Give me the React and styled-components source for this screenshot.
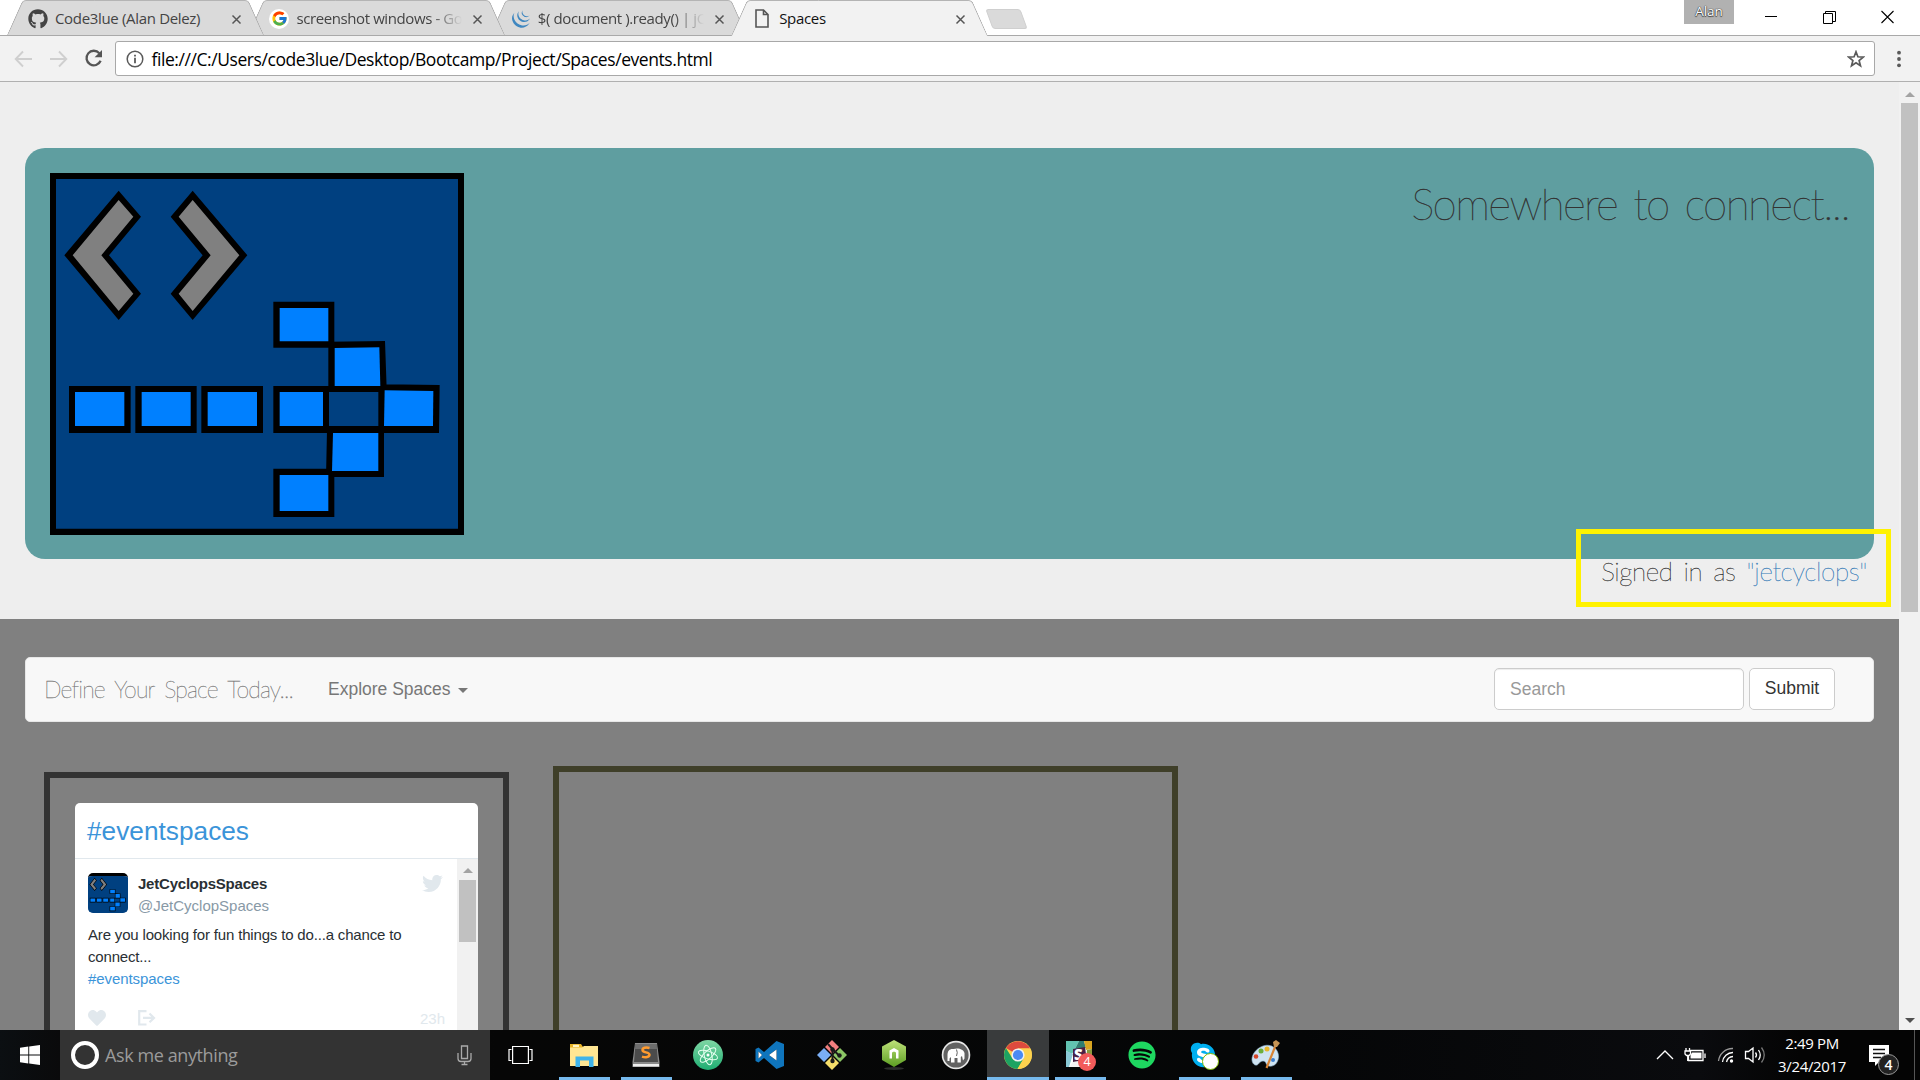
import React from "react";
import styled, { createGlobalStyle, css } from "styled-components";
import { FaGithub, FaTwitter, FaHeart, FaSpotify, FaSkype } from "react-icons/fa";
import { FcGoogle } from "react-icons/fc";
import { SiJquery } from "react-icons/si";

const GlobalStyle = createGlobalStyle`
  * { box-sizing: border-box; }
  html, body { margin: 0; padding: 0; overflow: hidden; }
  body { width: 1920px; height: 1080px; background: #fff; }
  svg { display: block; }
`;

const ui = `"Open Sans", "Noto Sans", sans-serif`;
const arial = `"Liberation Sans", Arial, sans-serif`;
const thin = `Lato, "Open Sans", sans-serif`;

const Screen = styled.div`
  display: flex;
  flex-direction: column;
  width: 1920px;
  height: 1080px;
  overflow: hidden;
  font-family: ${ui};
`;

/* ---------- browser chrome ---------- */

const TabStrip = styled.header`
  position: relative;
  display: flex;
  justify-content: space-between;
  height: 36px;
  flex: none;
  padding-left: 7px;
  background: #fff;
  box-shadow: inset 0 -1px 0 #a9a9a9;
`;

const Tabs = styled.div`
  display: flex;
`;

const Tab = styled.div`
  position: relative;
  z-index: ${(p) => p.$z};
  display: flex;
  align-items: center;
  width: 257px;
  height: 36px;
  margin-right: -15.6px;
  padding: 0 22px 0 21px;
  color: ${(p) => (p.$active ? "#111" : "#444")};
  &::before,
  &::after {
    content: "";
    position: absolute;
    z-index: -1;
    top: 0;
    bottom: ${(p) => (p.$active ? "0" : "1px")};
    background: ${(p) => (p.$active ? "#f2f2f2" : "#dadada")};
    border-top: 1px solid #b4b4b4;
  }
  &::before {
    left: 0;
    right: 40%;
    border-left: 1px solid #a6a6a6;
    border-top-left-radius: 4px;
    transform: skewX(-24deg);
    transform-origin: bottom left;
  }
  &::after {
    left: 40%;
    right: 0;
    border-right: 1px solid #a6a6a6;
    border-top-right-radius: 4px;
    transform: skewX(24deg);
    transform-origin: bottom right;
  }
`;

const TabIcon = styled.span`
  display: flex;
  flex: none;
  align-items: center;
  justify-content: center;
  width: 20px;
  height: 20px;
  margin: 1px 7px 0 0;
  border-radius: 50%;
  background: ${(p) => p.$bg || "transparent"};
  color: ${(p) => p.$color || "#444"};
`;

const TabTitle = styled.span`
  flex: 1;
  min-width: 0;
  white-space: nowrap;
  font-size: 15px;
  line-height: 22px;
  letter-spacing: ${(p) => p.$ls || "-0.33px"};
  ${(p) =>
    p.$fade &&
    css`
      -webkit-mask-image: linear-gradient(to right, #000 82%, transparent 100%);
      mask-image: linear-gradient(to right, #000 82%, transparent 100%);
    `}
`;

const TabClose = styled.span`
  display: flex;
  flex: none;
  width: 11px;
  margin: 2px 0 0 10px;
`;

const NewTab = styled.span`
  width: 35px;
  height: 20px;
  margin: 9px 0 0 16px;
  border: 1px solid #cfcfcf;
  border-radius: 3px;
  background: #dadada;
  transform: skewX(20deg);
`;

const WindowControls = styled.div`
  display: flex;
  padding-right: 26px;
`;

const Profile = styled.span`
  width: 50px;
  height: 24px;
  margin-right: 31px;
  background: #b1b1b1;
  color: #fff;
  font-size: 13.5px;
  line-height: 22px;
  text-align: center;
  letter-spacing: 0;
  text-shadow: 0 0 1px #333, 0 0 1px #333, 0 1px 1px #444;
`;

const ControlIcons = styled.div`
  display: flex;
  gap: 44.5px;
  padding-top: 10px;
`;

const Toolbar = styled.div`
  display: flex;
  align-items: center;
  flex: none;
  height: 46px;
  padding: 0 15px 0 14px;
  background: #f2f2f2;
  border-bottom: 1px solid #b0b0b0;
`;

const NavIcons = styled.div`
  display: flex;
  align-items: center;
  gap: 16px;
  width: 101px;
`;

const AddressBar = styled.div`
  display: flex;
  align-items: center;
  width: 1760px;
  height: 35px;
  padding: 0 9px 0 10px;
  background: #fff;
  border: 1px solid #a8a8a8;
  border-radius: 3px;
`;

const Url = styled.span`
  flex: 1;
  margin-left: 7.5px;
  color: #000;
  font-size: 17.5px;
  line-height: 30px;
  letter-spacing: -0.43px;
`;

const MenuDots = styled.div`
  display: flex;
  margin-left: 22px;
`;

/* ---------- page ---------- */

const Viewport = styled.div`
  display: flex;
  flex: none;
  height: 948px;
`;

const Page = styled.main`
  display: flex;
  flex-direction: column;
  width: 1899px;
  height: 948px;
  overflow: hidden;
  background: #808080;
`;

const Scrollbar = styled.div`
  display: flex;
  flex-direction: column;
  align-items: center;
  width: 21px;
  height: 100%;
  padding: ${(p) => p.$pad || "10px 0 7px"};
  background: #f1f1f1;
`;

const Arrow = styled.span`
  width: 0;
  height: 0;
  border: 5px solid transparent;
  ${(p) =>
    p.$down
      ? css`
          margin-top: auto;
          border-bottom: 0;
          border-top-color: #505050;
        `
      : css`
          border-top: 0;
          border-bottom-color: #a3a3a3;
        `}
`;

const Thumb = styled.span`
  width: 17px;
  height: ${(p) => p.$h}px;
  margin-top: ${(p) => p.$gap}px;
  background: #c1c1c1;
`;

const Jumbotron = styled.section`
  position: relative;
  flex: none;
  height: 537px;
  padding: 66px 25px 0;
  background: #eee;
`;

const Banner = styled.div`
  display: flex;
  justify-content: space-between;
  height: 411px;
  padding: 25px;
  border-radius: 20px;
  background: #5f9ea0;
`;

const Slogan = styled.h1`
  margin: 0;
  color: #333;
  font-family: ${thin};
  font-weight: 100;
  font-size: 44px;
  line-height: 60px;
  letter-spacing: -1.6px;
  word-spacing: 5px;
  -webkit-text-stroke: 0.4px currentColor;
`;

const SignedIn = styled.p`
  margin: -6px 7px 0 0;
  text-align: right;
  color: #333;
  font-family: ${thin};
  font-weight: 100;
  font-size: 26px;
  line-height: 36px;
  letter-spacing: -0.4px;
  word-spacing: 4px;
  -webkit-text-stroke: 0.3px currentColor;
`;

const UserName = styled.span`
  color: #337ab7;
`;

const Highlight = styled.div`
  position: absolute;
  left: 1576px;
  top: 447px;
  width: 315px;
  height: 78px;
  border: 5px solid #fff200;
`;

const Navbar = styled.nav`
  display: flex;
  align-items: center;
  flex: none;
  height: 65px;
  margin: 38px 25px 0;
  padding: 0 38px 0 18px;
  border: 1px solid #e7e7e7;
  border-radius: 5px;
  background: #f8f8f8;
`;

const Brand = styled.span`
  width: 284px;
  padding-bottom: 1px;
  color: #777;
  font-family: ${thin};
  font-weight: 100;
  font-size: 23px;
  line-height: 30px;
  white-space: nowrap;
  letter-spacing: -0.85px;
  word-spacing: 4.5px;
  -webkit-text-stroke: 0.3px currentColor;
`;

const NavLink = styled.span`
  display: flex;
  align-items: center;
  flex: 1;
  gap: 7px;
  color: #777;
  font-family: ${arial};
  font-size: 17.5px;
  line-height: 25px;
  &::after {
    content: "";
    margin-top: 2px;
    border: 5px solid transparent;
    border-bottom: 0;
    border-top-color: #777;
  }
`;

const SearchInput = styled.input`
  width: 250px;
  height: 42px;
  margin: 0 5px 2px 0;
  padding: 1px 15px 0;
  border: 1px solid #ccc;
  border-radius: 5px;
  box-shadow: inset 0 1px 1px rgba(0, 0, 0, 0.075);
  font-family: ${arial};
  font-size: 17.5px;
  &::placeholder {
    color: #999;
    opacity: 1;
  }
`;

const SubmitButton = styled.button`
  width: 86px;
  height: 42px;
  margin: 0 0 2px;
  padding: 0;
  border: 1px solid #ccc;
  border-radius: 5px;
  background: #fff;
  color: #333;
  font-family: ${arial};
  font-size: 17.5px;
`;

const Columns = styled.section`
  display: flex;
  align-items: flex-start;
  padding: 44px 0 0 44px;
`;

const Frame = styled.div`
  width: ${(p) => p.$w}px;
  height: 400px;
  margin: ${(p) => p.$m || 0};
  padding: 25px;
  border: 6px solid ${(p) => p.$color};
`;

const Widget = styled.article`
  width: 403px;
  height: 400px;
  border-radius: 5px;
  overflow: hidden;
  background: #fff;
  font-family: ${arial};
`;

const WidgetHeader = styled.h2`
  height: 56px;
  margin: 0;
  padding: 0 12px;
  border-bottom: 1px solid #e1e8ed;
  color: #3b94d9;
  font-weight: 400;
  font-size: 26.25px;
  line-height: 56px;
`;

const WidgetBody = styled.div`
  display: flex;
  height: 344px;
`;

const Tweet = styled.div`
  flex: 1;
  padding: 14px 12px 0 13px;
`;

const Author = styled.div`
  display: flex;
  height: 40px;
  padding-right: 2px;
  color: #e1e8ed;
`;

const Avatar = styled.span`
  width: 40px;
  height: 40px;
  margin-right: 10px;
  border-top: 3px solid #000;
  border-radius: 5px;
  overflow: hidden;
`;

const Names = styled.div`
  flex: 1;
  line-height: 22px;
`;

const FullName = styled.div`
  color: #292f33;
  font-size: 15px;
  font-weight: 700;
  letter-spacing: -0.22px;
`;

const Handle = styled.div`
  color: #8899a6;
  font-size: 15px;
`;

const TweetText = styled.p`
  margin: 11px 0 0;
  color: #292f33;
  font-size: 15px;
  line-height: 22px;
  letter-spacing: -0.17px;
  white-space: nowrap;
`;

const HashTag = styled.span`
  color: #3b94d9;
  letter-spacing: -0.07px;
`;

const TweetActions = styled.div`
  display: flex;
  align-items: center;
  height: 22px;
  margin-top: 17px;
  color: #e1e8ed;
  font-size: 15px;
`;

const ShareSlot = styled.span`
  flex: 1;
  padding-left: 32px;
`;

/* ---------- taskbar ---------- */

const Taskbar = styled.footer`
  display: flex;
  flex: none;
  height: 50px;
  background: linear-gradient(to right, #0b0f12 0, #0a0a0b 60px, #060606 500px, #050607 1300px, #0a0b0e 1700px, #040404 1800px);
`;

const Center = styled.span`
  display: flex;
  align-items: center;
  justify-content: center;
  width: ${(p) => p.$w}px;
  height: 50px;
  padding-right: ${(p) => p.$pr || 0}px;
`;

const Cortana = styled.div`
  display: flex;
  align-items: center;
  width: 430px;
  padding: 0 18px 0 11px;
  background: #333;
`;

const CortanaRing = styled.span`
  width: 28px;
  height: 28px;
  border: 4px solid #fff;
  border-radius: 50%;
`;

const CortanaText = styled.span`
  flex: 1;
  margin-left: 6px;
  color: #9b9b9b;
  font-size: 18px;
  letter-spacing: -0.4px;
`;

const AppSlot = styled.span`
  display: flex;
  align-items: center;
  justify-content: center;
  width: 62px;
  height: 50px;
  background:
    linear-gradient(#76b9ed, #76b9ed) bottom / ${(p) => (p.$active ? "62px" : p.$open ? "51px" : "0")} 3px no-repeat,
    ${(p) => (p.$active ? "#393b3c" : "transparent")};
`;

const Tray = styled.div`
  display: flex;
  align-items: center;
  margin-left: auto;
  padding-right: 5px;
`;

const Clock = styled.div`
  width: 80px;
  margin: 0 16px 0 5px;
  color: #fff;
  font-size: 15px;
  line-height: 23px;
  text-align: center;
  letter-spacing: -0.35px;
  white-space: nowrap;
`;

const ActionCenter = styled.div`
  position: relative;
  width: 47px;
  height: 50px;
  padding: 15px 0 0 1px;
  border-right: 1px solid #555;
`;

const Badge = styled.span`
  position: absolute;
  left: 10px;
  top: 24px;
  width: 21px;
  height: 21px;
  border: 1px solid #999;
  border-radius: 50%;
  background: #222;
  color: #fff;
  font-size: 14px;
  font-weight: 600;
  line-height: 19px;
  text-align: center;
`;

/* ---------- drawings ---------- */

const bluePolys = [
  "165,756 313,756 313,858 165,858",
  "365,756 512,756 512,858 365,858",
  "563,756 711,756 711,858 563,858",
  "779,756 909,756 909,858 779,858",
  "779,504 925,504 925,604 779,604",
  "944,624 1078,622 1081,738 944,738",
  "1094,751 1240,753 1239,858 1092,858",
  "939,879 1075,879 1075,993 936,993",
  "779,1005 925,1005 925,1113 779,1113",
];

const Logo = ({ width, height, frame = "#000" }) => (
  <svg width={width} height={height} viewBox="90 99 1242 1086" preserveAspectRatio="none">
    <path d="M90 99H1332V1185H90Z" fill={frame} />
    <path d="M108 117H1314V1166H108Z" fill="#004080" />
    <path d="M133 346L296 152L363 230L267 346L363 461L296 540ZM518 152L682 346L518 540L452 461L548 346L452 230Z" />
    <path d="M158 346L296 180L340 230L244 346L340 461L296 513ZM518 180L658 346L518 513L476 461L572 346L476 230Z" fill="#808080" />
    <path d="M147 738H332V879H147ZM346 738H530V879H346ZM544 738H729V879H544ZM760 738H1092V879H760ZM760 485H943V623H760ZM925 605L1095 603L1100 745H925ZM1075 738L1092 733L1259 735L1257 879H1075ZM921 870H1092V1011H918ZM760 986H943V1131H760Z" />
    <path d="M927 756H1075V858H927Z" fill="#004080" />
    {bluePolys.map((p) => (
      <polygon key={p} points={p} fill="#0080ff" />
    ))}
  </svg>
);

const Cross = () => (
  <svg width="11" height="11" viewBox="0 0 11 11">
    <path d="M1.5 1.5L9.5 9.5M9.5 1.5L1.5 9.5" stroke="#555" strokeWidth="1.5" />
  </svg>
);

const FileIcon = () => (
  <svg width="14" height="19" viewBox="0 0 14 19" fill="none" stroke="#555" strokeWidth="1.6">
    <path d="M1 1H8.5L13 5.5V18H1ZM8.5 1V5.5H13" />
  </svg>
);

const WindowButtons = () => (
  <ControlIcons>
    <svg width="13" height="13" viewBox="0 0 13 13"><path d="M0 6.5H12" stroke="#000" /></svg>
    <svg width="14" height="14" viewBox="0 0 14 14" fill="none" stroke="#000">
      <path d="M.5 3.5H9.500V13.500H.5ZM2.500 3.500V1.500H12.500V11.500H9.500" />
    </svg>
    <svg width="13" height="14" viewBox="0 0 13 14"><path d="M.5 1L12.500 13M12.500 1L.5 13" stroke="#000" strokeWidth="1.1" /></svg>
  </ControlIcons>
);

const ArrowIcon = ({ flip }) => (
  <svg width="19" height="18" viewBox="0 0 19 18" fill="none" stroke="#cfcfcf" strokeWidth="1.9">
    <path d={flip ? "M1 9H17M10 1.500L17.300 9L10 16.500" : "M18 9H2M9 1.500L1.700 9L9 16.500"} />
  </svg>
);

const ReloadIcon = () => (
  <svg width="19" height="19" viewBox="0 0 19 19">
    <path d="M15.300 4.200A7.300 7.300 0 1 0 16.600 11.800" fill="none" stroke="#555" strokeWidth="2.300" />
    <path d="M18 1V8.300H10.600Z" fill="#555" />
  </svg>
);

const InfoIcon = () => (
  <svg width="18" height="18" viewBox="0 0 18 18">
    <circle cx="9" cy="9" r="7.800" fill="none" stroke="#5a5a5a" strokeWidth="1.500" />
    <path d="M9 7.800V13.200M9 4.800V6.500" stroke="#5a5a5a" strokeWidth="1.800" />
  </svg>
);

const StarIcon = () => (
  <svg width="18" height="18" viewBox="0 0 18 18">
    <path d="M9 1.800L10.900 6.800L16.300 7.100L12.100 10.500L13.500 15.800L9 12.800L4.500 15.800L5.900 10.500L1.700 7.100L7.100 6.800Z" fill="none" stroke="#5a5a5a" strokeWidth="1.700" />
  </svg>
);

const ShareIcon = () => (
  <svg width="18" height="16" viewBox="0 0 18 16" fill="none" stroke="#e1e8ed" strokeWidth="2.200">
    <path d="M8.500 1.200H1.200V14.500H8.500M5 7.900H15.500M11.500 3.500L16 7.900L11.500 12.300" />
  </svg>
);

const WindowsIcon = () => (
  <svg width="20" height="20" viewBox="0 0 20 20" fill="#fff">
    <path d="M0 2.800L8.300 1.600V9.500H0ZM9.200 1.500L20 0V9.500H9.200ZM0 10.400H8.300V18.400L0 17.200ZM9.200 10.400H20V20L9.200 18.500Z" />
  </svg>
);

const MicIcon = () => (
  <svg width="15" height="21" viewBox="0 0 15 21" fill="none" stroke="#aaa" strokeWidth="1.300">
    <path d="M4.500 1H10.500V13.500H4.500ZM1 8V13.500Q1 16.500 4 16.500H11Q14 16.500 14 13.500V8M7.500 16.500V19.500M4.500 19.500H10.500" />
  </svg>
);

const TaskViewIcon = () => (
  <svg width="25" height="20" viewBox="0 0 25 20" fill="none" stroke="#fff" strokeWidth="1.200">
    <path d="M4.600 1.500H20.400V18.500H4.600ZM3.500 4.500H1V15.500H3.500M21.500 4.500H24V15.500H21.500" />
  </svg>
);

const ExplorerIcon = () => (
  <svg width="28" height="24" viewBox="0 0 28 24">
    <path d="M0 1H11L13 4H26V7H0Z" fill="#e8b326" />
    <path d="M0 4.500H12L14 3H28V23H0Z" fill="#ffe693" />
    <path d="M3 1.800H9V4H3Z" fill="#fff3c0" />
    <path d="M5.500 24V13.500H23.500V24H19V17.500H10V24Z" fill="#3fb3ea" />
  </svg>
);

const SublimeIcon = () => (
  <svg width="28" height="26" viewBox="0 0 28 26">
    <path d="M3 1H25L27.500 20V25H.5V20Z" fill="#8a8a8a" />
    <path d="M3.500 2H24.500L26 20H2Z" fill="#4b4b4b" />
    <path d="M3.500 2H24.500L25 7H3Z" fill="#6d6d6d" />
    <path d="M1 22H27V24.500H1Z" fill="#eee" />
    <path d="M17.500 6C14 5 10.500 5.800 10.500 8C10.500 11.200 17.500 9.500 17.500 12.800C17.500 15 13.500 15.800 10 14.600" fill="none" stroke="#ff9b2f" strokeWidth="2.500" />
  </svg>
);

const AtomIcon = () => (
  <svg width="30" height="30" viewBox="0 0 30 30">
    <defs><linearGradient id="atom" x2="0" y2="1"><stop stopColor="#7fd6a4" /><stop offset="1" stopColor="#1fae72" /></linearGradient></defs>
    <circle cx="15" cy="15" r="15" fill="url(#atom)" />
    <g fill="none" stroke="#e6fff0" strokeWidth="1">
      <ellipse cx="15" cy="15" rx="3.800" ry="10" transform="rotate(-12 15 15)" />
      <ellipse cx="15" cy="15" rx="3.800" ry="10" transform="rotate(48 15 15)" />
      <ellipse cx="15" cy="15" rx="3.800" ry="10" transform="rotate(108 15 15)" />
    </g>
    <circle cx="15" cy="15" r="1.500" fill="#fff" />
  </svg>
);

const CodeIcon = () => (
  <svg width="30" height="28" viewBox="0 0 30 28">
    <path d="M21.500 0L29 3V25L21.500 28L9 17L3.500 21.500L.5 20V8L3.500 6.500L9 11ZM21.500 8.500L14 14L21.500 19.500ZM3.500 10.500V17.500L7 14Z" fill="#0f75bd" fillRule="evenodd" />
    <path d="M21.500 8.500L14 14L21.500 19.500ZM3.500 10.500V17.500L7 14Z" fill="#fff" />
  </svg>
);

const GitIcon = () => (
  <svg width="30" height="30" viewBox="0 0 30 30">
    <path d="M15 0L22 7L15 14L8 7Z" fill="#f37f7f" />
    <path d="M7 8L14 15L7 22L0 15Z" fill="#7aaef5" />
    <path d="M15 16L22 23L15 30L8 23Z" fill="#f5dd6a" />
    <path d="M23 8L30 15L23 22L16 15Z" fill="#8cc665" />
    <path d="M11 4L15.500 9V23M15.500 9L23 16.500" fill="none" stroke="#1a1a1a" strokeWidth="2" />
    <circle cx="15.500" cy="9.500" r="2.200" fill="#1a1a1a" />
    <circle cx="15.500" cy="21" r="2.200" fill="#1a1a1a" />
    <circle cx="22.500" cy="15.500" r="2.200" fill="#1a1a1a" />
  </svg>
);

const NodeIcon = () => (
  <svg width="26" height="30" viewBox="0 0 26 30">
    <defs><linearGradient id="node" x2="0" y2="1"><stop stopColor="#bfe27a" /><stop offset="1" stopColor="#5c9e22" /></linearGradient></defs>
    <ellipse cx="13" cy="28.500" rx="10" ry="1.500" fill="#2c2e2c" />
    <path d="M13 0L25 6.500V20L13 27L1 20V6.500Z" fill="url(#node)" />
    <path d="M8.500 18.500V10.500L13 8L17.500 10.500V18.500H15V12.500L13 11.500L11 12.500V18.500Z" fill="#fff" />
  </svg>
);

const MongooseIcon = () => (
  <svg width="30" height="30" viewBox="0 0 30 30">
    <circle cx="15" cy="15" r="14.300" fill="#e8e8e8" />
    <circle cx="15" cy="15" r="12.600" fill="#626262" />
    <path d="M6.500 21V15C6.500 10.500 9 8.500 12.500 9C17 7.500 22.500 9 23.500 13V18.500L22 20.500L21 16L19.800 17V22.500H16.500V18H13.500V22.500H10V17L8.500 18.500V21Z" fill="#fff" />
    <path d="M15.500 9.500Q17 12.500 15.500 16" stroke="#626262" fill="none" />
  </svg>
);

const ChromeIcon = () => (
  <svg width="28" height="28" viewBox="0 0 28 28">
    <circle cx="14" cy="14" r="14" fill="#fdd24e" />
    <path d="M14 14L1.900 7A14 14 0 0 1 26.100 7.500H14Z" fill="#dd4b3e" />
    <path d="M1.900 7A14 14 0 0 0 13.500 28L20 17.500L14 14L8.500 17.500Z" fill="#1da362" />
    <path d="M14 7.500H26.200A14 14 0 0 1 13.500 28L19.800 17Z" fill="#fdd24e" />
    <circle cx="14" cy="14" r="6.600" fill="#f1f1f1" />
    <circle cx="14" cy="14" r="5.100" fill="#4a8af4" />
  </svg>
);

const SlackApp = styled.span`
  position: relative;
  width: 30px;
  height: 30px;
`;

const SlackMark = styled.span`
  position: absolute;
  left: 9px;
  top: 3px;
  color: #fff;
  font-size: 15px;
  font-weight: 800;
  line-height: 22px;
`;

const SlackCount = styled.span`
  position: absolute;
  right: -1px;
  bottom: -1px;
  width: 18px;
  height: 18px;
  border-radius: 50%;
  background: #f25b5b;
  color: #fff;
  font-size: 12.500px;
  line-height: 18px;
  text-align: center;
`;

const SlackIcon = () => (
  <SlackApp>
    <svg width="28" height="28" viewBox="0 0 28 28">
      <path d="M1 1H27V27H1Z" fill="#fff" />
      <path d="M1 1H14L10 9L7 14L1 11Z" fill="#62c3b1" />
      <path d="M14 1H19L21 8L10 9Z" fill="#2f7d70" />
      <path d="M19 1H27V9L21 10Z" fill="#d9a521" />
      <path d="M1 11L8 14L4 27H1Z" fill="#89c9d6" />
      <path d="M8 9L20 7L22 21L8 22Z" fill="#4a1f45" />
      <path d="M8 22L20 20L27 27H4Z" fill="#f3f3f3" />
      <path d="M22 10L27 9V27L21 20Z" fill="#8a9a3c" />
    </svg>
    <SlackMark>S</SlackMark>
    <SlackCount>4</SlackCount>
  </SlackApp>
);

const SpotifyDisc = styled.span`
  display: flex;
  width: 28px;
  height: 28px;
  color: #1ed760;
`;

const SkypeApp = styled.span`
  position: relative;
  width: 29px;
  height: 29px;
  margin-right: 2px;
  color: #00aff0;
  background: radial-gradient(circle, #fff 8px, transparent 9px);
  &::after {
    content: "";
    position: absolute;
    right: -1px;
    bottom: 0;
    width: 15px;
    height: 15px;
    border: 1px solid #7fba00;
    border-radius: 50%;
    background: #fff;
  }
`;

const PaintIcon = () => (
  <svg width="30" height="30" viewBox="0 0 30 30">
    <path d="M12 6C20 3 28 9 27.500 17C27 24 22 27 18 26C14 25 16 21 12 21C8 21 8 26 4 25C-2 22 1 10 12 6Z" fill="#cfe3f2" stroke="#8fb3cf" strokeWidth=".6" />
    <circle cx="5" cy="16.500" r="2.300" fill="#d9482b" />
    <circle cx="10" cy="11" r="2.500" fill="#6cae3d" />
    <circle cx="16" cy="9" r="2.500" fill="#e9b62c" />
    <circle cx="22" cy="20" r="2" fill="#3c7fd0" />
    <path d="M15.500 28L24 7" stroke="#d98435" strokeWidth="2.200" />
    <path d="M23 7L22 2L25 0L29 3L26 7Z" fill="#c69455" />
  </svg>
);

const TrayIcons = () => (
  <svg width="112" height="24" viewBox="1655 1043 112 24" fill="none" stroke="#fff" strokeWidth="1.300">
    <path d="M1657 1059L1665 1051L1673 1059" />
    <path d="M1690 1050.500H1703V1060.500H1688.500V1056M1705 1053.500V1058M1686 1048V1051M1689.500 1048V1051M1685 1051H1690.500V1054L1689 1055.500H1686.500L1685 1054ZM1687.700 1055V1061" />
    <path d="M1692 1052.500H1701.500V1058.500H1690.500V1055Z" fill="#fff" stroke="none" />
    <path d="M1718.500 1061A14 14 0 0 1 1733 1048.500" stroke="#999" />
    <path d="M1722.500 1062A10.500 10.500 0 0 1 1733 1052.500M1726.500 1062A7 7 0 0 1 1733 1056.500" />
    <circle cx="1731.500" cy="1061" r="1.700" fill="#fff" stroke="none" />
    <path d="M1745.500 1051.500H1748.500L1753 1048V1062L1748.500 1058.500H1745.500ZM1755.500 1052.500Q1757.500 1055 1755.500 1057.500M1758.500 1050Q1762 1055 1758.500 1060" />
    <path d="M1761.500 1047.500Q1767 1055 1761.500 1062.500" stroke="#777" />
  </svg>
);

const apps = [
  { id: "explorer", icon: <ExplorerIcon />, open: true },
  { id: "sublime", icon: <SublimeIcon />, open: true },
  { id: "atom", icon: <AtomIcon /> },
  { id: "code", icon: <CodeIcon /> },
  { id: "git", icon: <GitIcon /> },
  { id: "node", icon: <NodeIcon /> },
  { id: "mongo", icon: <MongooseIcon /> },
  { id: "chrome", icon: <ChromeIcon />, active: true },
  { id: "slack", icon: <SlackIcon />, open: true },
  { id: "spotify", icon: <SpotifyDisc><FaSpotify size={28} /></SpotifyDisc> },
  { id: "skype", icon: <SkypeApp><FaSkype size={29} /></SkypeApp>, open: true },
  { id: "paint", icon: <PaintIcon />, open: true },
];

const tabs = [
  { title: "Code3lue (Alan Delez)", icon: <FaGithub size={20} />, z: 4 },
  { title: "screenshot windows - Go", icon: <FcGoogle size={17} />, bg: "#fff", fade: true, ls: "-0.4px", z: 3 },
  { title: "$( document ).ready() | jQ", icon: <SiJquery size={18} />, color: "#3f87c0", fade: true, ls: "-0.4px", z: 2 },
  { title: "Spaces", icon: <FileIcon />, active: true, z: 5 },
];

export default function App() {
  return (
    <Screen>
      <GlobalStyle />
      <TabStrip>
        <Tabs>
          {tabs.map((t) => (
            <Tab key={t.title} $z={t.z} $active={t.active}>
              <TabIcon $bg={t.bg} $color={t.color}>{t.icon}</TabIcon>
              <TabTitle $fade={t.fade} $ls={t.ls}>{t.title}</TabTitle>
              <TabClose><Cross /></TabClose>
            </Tab>
          ))}
          <NewTab />
        </Tabs>
        <WindowControls>
          <Profile>Alan</Profile>
          <WindowButtons />
        </WindowControls>
      </TabStrip>

      <Toolbar>
        <NavIcons>
          <ArrowIcon />
          <ArrowIcon flip />
          <ReloadIcon />
        </NavIcons>
        <AddressBar>
          <InfoIcon />
          <Url>file:///C:/Users/code3lue/Desktop/Bootcamp/Project/Spaces/events.html</Url>
          <StarIcon />
        </AddressBar>
        <MenuDots>
          <svg width="4" height="18" viewBox="0 0 4 18" fill="#5a5a5a">
            <circle cx="2" cy="2.700" r="1.900" /><circle cx="2" cy="9" r="1.900" /><circle cx="2" cy="15.300" r="1.900" />
          </svg>
        </MenuDots>
      </Toolbar>

      <Viewport>
        <Page>
          <Jumbotron>
            <Banner>
              <Logo width={414} height={362} />
              <Slogan>Somewhere to connect...</Slogan>
            </Banner>
            <SignedIn>
              Signed in as <UserName>"jetcyclops"</UserName>
            </SignedIn>
            <Highlight />
          </Jumbotron>
          <Navbar>
            <Brand>Define Your Space Today...</Brand>
            <NavLink>Explore Spaces</NavLink>
            <SearchInput placeholder="Search" />
            <SubmitButton>Submit</SubmitButton>
          </Navbar>
          <Columns>
            <Frame $w={465} $color="#333" $m="6px 44px 0 0">
              <Widget>
                <WidgetHeader>#eventspaces</WidgetHeader>
                <WidgetBody>
                  <Tweet>
                    <Author>
                      <Avatar><Logo width={40} height={37} frame="#004080" /></Avatar>
                      <Names>
                        <FullName>JetCyclopsSpaces</FullName>
                        <Handle>@JetCyclopSpaces</Handle>
                      </Names>
                      <FaTwitter size={21} />
                    </Author>
                    <TweetText>
                      Are you looking for fun things to do...a chance to<br />
                      connect...<br />
                      <HashTag>#eventspaces</HashTag>
                    </TweetText>
                    <TweetActions>
                      <FaHeart size={18} />
                      <ShareSlot><ShareIcon /></ShareSlot>
                      23h
                    </TweetActions>
                  </Tweet>
                  <Scrollbar $pad="9px 0 0">
                    <Arrow />
                    <Thumb $h={62} $gap={7} />
                  </Scrollbar>
                </WidgetBody>
              </Widget>
            </Frame>
            <Frame $w={625} $color="#3f3f29" />
          </Columns>
        </Page>
        <Scrollbar>
          <Arrow />
          <Thumb $h={509} $gap={6} />
          <Arrow $down />
        </Scrollbar>
      </Viewport>

      <Taskbar>
        <Center $w={60}><WindowsIcon /></Center>
        <Cortana>
          <CortanaRing />
          <CortanaText>Ask me anything</CortanaText>
          <MicIcon />
        </Cortana>
        <Center $w={63} $pr={3}><TaskViewIcon /></Center>
        {apps.map((a) => (
          <AppSlot key={a.id} $open={a.open} $active={a.active}>{a.icon}</AppSlot>
        ))}
        <Tray>
          <TrayIcons />
          <Clock>
            <div>2:49 PM</div>
            <div>3/24/2017</div>
          </Clock>
          <ActionCenter>
            <svg width="21" height="22" viewBox="0 0 21 22">
              <path d="M0 0H20V17H10L6 21V17H0Z" fill="#fff" />
              <path d="M4 4.500H16M4 8.500H16M4 12.500H12" stroke="#111" strokeWidth="1.300" />
            </svg>
            <Badge>4</Badge>
          </ActionCenter>
        </Tray>
      </Taskbar>
    </Screen>
  );
}
